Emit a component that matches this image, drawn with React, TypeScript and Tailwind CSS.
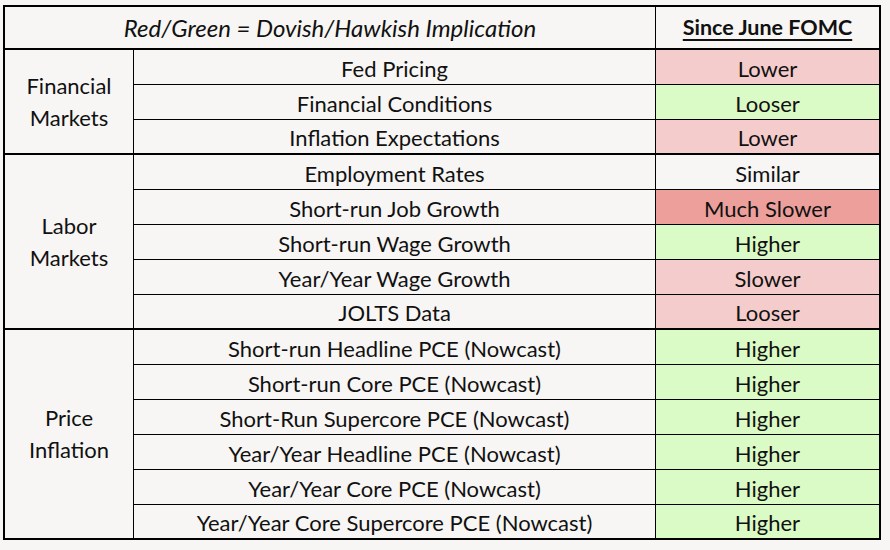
const RED = 'bg-[#f4cccc]';
const GREEN = 'bg-[#dafbc6]';
const DARK_RED = 'bg-[#ec9f9b]';

type Row = { label: string; value: string; tone: string };

const groups: { title: string[]; rows: Row[] }[] = [
  {
    title: ['Financial', 'Markets'],
    rows: [
      { label: 'Fed Pricing', value: 'Lower', tone: RED },
      { label: 'Financial Conditions', value: 'Looser', tone: GREEN },
      { label: 'Inflation Expectations', value: 'Lower', tone: RED },
    ],
  },
  {
    title: ['Labor', 'Markets'],
    rows: [
      { label: 'Employment Rates', value: 'Similar', tone: '' },
      { label: 'Short-run Job Growth', value: 'Much Slower', tone: DARK_RED },
      { label: 'Short-run Wage Growth', value: 'Higher', tone: GREEN },
      { label: 'Year/Year Wage Growth', value: 'Slower', tone: RED },
      { label: 'JOLTS Data', value: 'Looser', tone: RED },
    ],
  },
  {
    title: ['Price', 'Inflation'],
    rows: [
      { label: 'Short-run Headline PCE (Nowcast)', value: 'Higher', tone: GREEN },
      { label: 'Short-run Core PCE (Nowcast)', value: 'Higher', tone: GREEN },
      { label: 'Short-Run Supercore PCE (Nowcast)', value: 'Higher', tone: GREEN },
      { label: 'Year/Year Headline PCE (Nowcast)', value: 'Higher', tone: GREEN },
      { label: 'Year/Year Core PCE (Nowcast)', value: 'Higher', tone: GREEN },
      { label: 'Year/Year Core Supercore PCE (Nowcast)', value: 'Higher', tone: GREEN },
    ],
  },
];

export default function App() {
  return (
    <div className="w-[890px] h-[550px] bg-[#f7f6f4] pt-[5px] pl-[3px] text-[#111] text-[22px] font-['Lato','Open_Sans',sans-serif]">
      <div className="w-[878px] border-2 border-black">
        <div className="flex h-[43px] border-b-2 border-black">
          <div className="w-[651px] border-r border-black flex items-center justify-center italic text-[24px]">
            Red/Green = Dovish/Hawkish Implication
          </div>
          <div className="flex-1 flex items-center justify-center font-bold underline underline-offset-4 decoration-2 text-[21.5px]">
            Since June FOMC
          </div>
        </div>
        {groups.map((group, gi) => (
          <div key={group.title[0]} className={`flex ${gi < groups.length - 1 ? 'border-b-2 border-black' : ''}`}>
            <div className="w-[129px] border-r border-black flex flex-col items-center justify-center leading-[32px]">
              {group.title.map((t) => (
                <span key={t}>{t}</span>
              ))}
            </div>
            <div className="flex-1">
              {group.rows.map((row, ri) => {
                const last = ri === group.rows.length - 1;
                return (
                  <div
                    key={row.label}
                    className={`flex ${last ? 'h-[33px]' : 'h-[35px] border-b border-black'}`}
                  >
                    <div className="w-[522px] border-r border-black flex items-center justify-center pt-[2px]">{row.label}</div>
                    <div className={`flex-1 flex items-center justify-center pt-[2px] ${row.tone}`}>{row.value}</div>
                  </div>
                );
              })}
            </div>
          </div>
        ))}
      </div>
    </div>
  );
}
